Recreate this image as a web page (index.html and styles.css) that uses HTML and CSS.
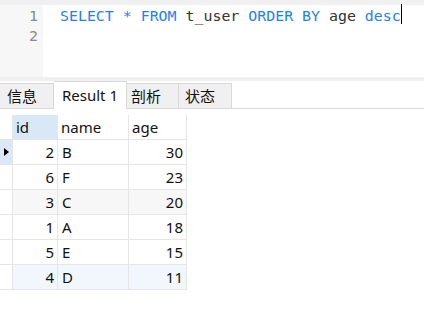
FILE: index.html
```html
<!DOCTYPE html>
<html lang="zh-CN">
<head>
    <meta charset="UTF-8">
    <meta name="viewport" content="width=device-width, initial-scale=1.0">
    <title>查询结果</title>
    <link rel="stylesheet" href="styles.css">
</head>
<body>
    <!-- SQL 编辑区 -->
    <div class="editor">
        <div class="gutter">
            <div class="ln">1</div>
            <div class="ln">2</div>
        </div>
        <div class="code">
            <div class="line"><span class="kw">SELECT * FROM</span> <span class="id">t_user</span> <span class="kw">ORDER BY</span> <span class="id">age</span> <span class="kw">desc</span><span class="caret"></span></div>
            <div class="line"></div>
        </div>
    </div>

    <!-- 结果标签 -->
    <div class="tabs">
        <div class="tab t_info">信息</div>
        <div class="tab t_result on">Result 1</div>
        <div class="tab t_prof">剖析</div>
        <div class="tab t_stat">状态</div>
    </div>

    <!-- 结果表格 -->
    <div class="grid">
        <div class="c rh"></div>
        <div class="c hd sel">id</div>
        <div class="c hd">name</div>
        <div class="c hd">age</div>

        <div class="c rh cur"><span class="arrow"></span></div>
        <div class="c num">2</div><div class="c txt">B</div><div class="c num">30</div>

        <div class="c rh"></div>
        <div class="c num">6</div><div class="c txt">F</div><div class="c num">23</div>

        <div class="c rh"></div>
        <div class="c num alt">3</div><div class="c txt alt">C</div><div class="c num alt">20</div>

        <div class="c rh"></div>
        <div class="c num">1</div><div class="c txt">A</div><div class="c num">18</div>

        <div class="c rh"></div>
        <div class="c num">5</div><div class="c txt">E</div><div class="c num">15</div>

        <div class="c rh"></div>
        <div class="c num hov">4</div><div class="c txt hov">D</div><div class="c num hov">11</div>
    </div>
</body>
</html>
```

FILE: styles.css
```css
* {margin:0; padding:0; box-sizing:border-box;}
body {
    background:#fff; color:#111;
    font-family:"Noto Sans", "Noto Sans CJK SC", sans-serif; font-size:15px;
}

/* editor */
.editor {
    display:flex; height:81px;
    border-top:5px solid #f0f0f0; border-bottom:4px solid #f0f0f0;
    font-family:"DejaVu Sans Mono", monospace; font-size:14.9px;
}
.editor .gutter {width:43px; background:#f7f7f7; padding-right:5px; padding-top:1px;}
.editor .ln {height:20px; line-height:20px; text-align:right; color:#8a8a8a;}
.editor .code {flex:1; padding-left:17px; padding-top:1px;}
.editor .line {height:20px; line-height:20px; white-space:pre;}
.editor .kw {color:#1f80f5;}
.editor .id {color:#333;}
.editor .caret {display:inline-block; width:0; height:20px; border-left:1px solid #000; vertical-align:top; margin-top:-2px;}

/* tabs */
.tabs {
    display:flex; align-items:flex-end; height:28px;
    border-bottom:1px solid #d9d9d9;
}
.tab {
    height:25px; line-height:24px; text-align:center;
    background:#f0f0f0; border:1px solid #d9d9d9; border-bottom:0; border-left:0;
    color:#111;
}
.tab.on {height:28px; line-height:26px; background:#fff; margin-bottom:-1px;}
.t_info {width:54px; text-align:left; padding-left:7px;}
.t_result {width:73px;}
.t_prof {width:52px; text-align:left; padding-left:4px;}
.t_stat {width:53px; text-align:left; padding-left:6px;}

/* grid */
.grid {
    display:grid; grid-template-columns:13px 45px 71px 58px;
    grid-auto-rows:25px; margin-top:6px;
}
.grid .c {
    border-right:1px solid #e6e6e6; border-bottom:1px solid #e6e6e6;
    display:flex; align-items:center; white-space:nowrap;
}
.grid .hd {padding-left:3px;}
.grid .hd.sel {background:#d9e8f6;}
.grid .rh {background:#fff;}
.grid .rh.cur {background:#dbe9f7; padding-left:4px;}
.grid .arrow {
    width:0; height:0;
    border-left:5px solid #000; border-top:4.5px solid transparent; border-bottom:4.5px solid transparent;
}
.grid .num {justify-content:flex-end; padding-right:3px;}
.grid .txt {padding-left:4px;}
.grid .alt {background:#f7f7f7;}
.grid .hov {background:#f1f7fd;}
```
